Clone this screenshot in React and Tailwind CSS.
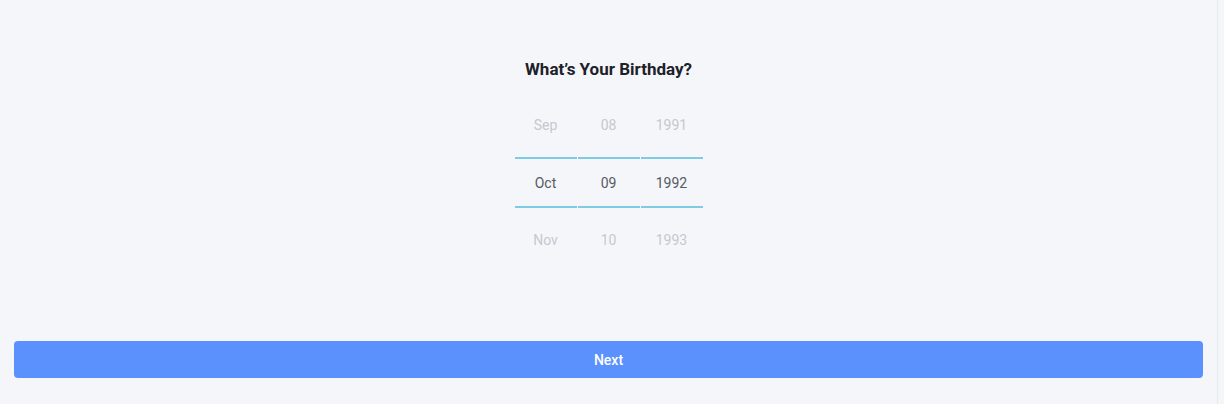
import React from "react";

const cols = [
  ["Sep", "Oct", "Nov"],
  ["08", "09", "10"],
  ["1991", "1992", "1993"],
];

export default function App() {
  return (
    <div
      className="w-[1224px] h-[404px] bg-[#f5f6fa] flex"
      style={{ fontFamily: "Roboto, 'Noto Sans', sans-serif" }}
    >
      <div className="w-[1218px] h-full flex flex-col items-center border-r border-[#e9eaee]">
        <h1 className="pt-[56px] h-[81px] text-[17px] leading-[26px] font-bold text-[#1d2129]">
          What’s Your Birthday?
        </h1>
        <div className="mt-[20px] flex gap-[1px]">
          {cols.map((c, i) => (
            <div key={i} className="w-[62px] flex flex-col items-stretch text-[14px]">
              <div className="h-[48px] flex items-center justify-center text-[#c5c8cf]">{c[0]}</div>
              <div className="h-[8px]" />
              <div className="h-[2px] bg-[#7fcbe3]" />
              <div className="h-[47px] pt-[1px] flex items-center justify-center text-[#555a63]">{c[1]}</div>
              <div className="h-[2px] bg-[#7fcbe3]" />
              <div className="h-[8px]" />
              <div className="h-[48px] flex items-center justify-center text-[#c5c8cf]">{c[2]}</div>
            </div>
          ))}
        </div>
        <div className="flex-1" />
        <div className="w-full px-[14px] pb-[26px]">
          <button className="w-full h-[37px] pt-[2px] rounded-[4px] bg-[#5b91fd] text-white text-[14px] font-medium flex items-center justify-center">
            Next
          </button>
        </div>
      </div>
    </div>
  );
}
